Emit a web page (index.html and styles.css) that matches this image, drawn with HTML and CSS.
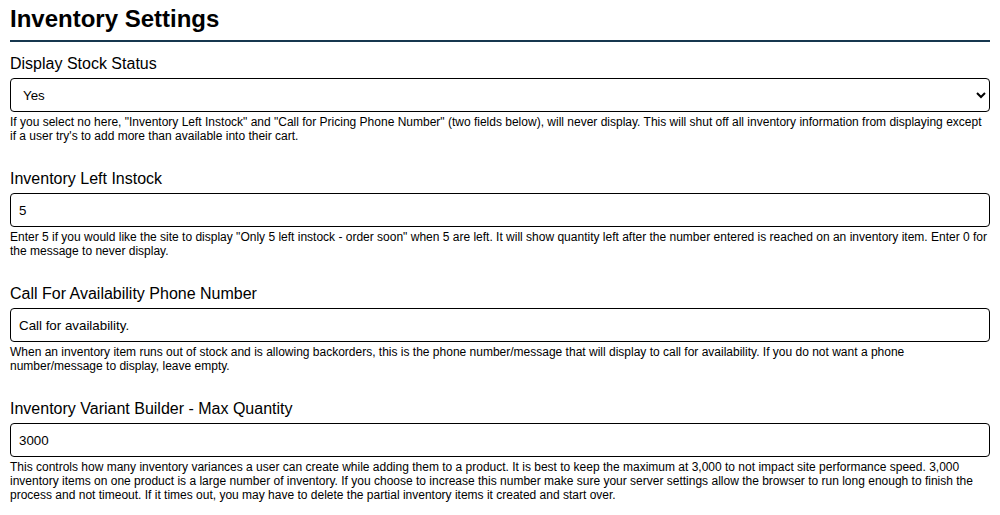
FILE: index.html
```html
<!DOCTYPE html>
<html lang="en">
<head>
    <meta charset="UTF-8">
    <meta name="viewport" content="width=device-width, initial-scale=1.0">
    <title>Inventory Settings</title>
    <link rel="stylesheet" href="styles.css">
</head>
<body>
    <div class="settings">
        <h1 class="settings-title">Inventory Settings</h1>

        <div class="field">
            <label class="field-label" for="stock-status">Display Stock Status</label>
            <select class="field-input" id="stock-status">
                <option>Yes</option>
                <option>No</option>
            </select>
            <div class="field-help">If you select no here, "Inventory Left Instock" and "Call for Pricing Phone Number" (two fields below), will never display. This will shut off all inventory information from displaying except if a user try's to add more than available into their cart.</div>
        </div>

        <div class="field">
            <label class="field-label" for="left-instock">Inventory Left Instock</label>
            <input class="field-input" type="text" id="left-instock" value="5">
            <div class="field-help">Enter 5 if you would like the site to display "Only 5 left instock - order soon" when 5 are left. It will show quantity left after the number entered is reached on an inventory item. Enter 0 for the message to never display.</div>
        </div>

        <div class="field">
            <label class="field-label" for="call-phone">Call For Availability Phone Number</label>
            <input class="field-input" type="text" id="call-phone" value="Call for availability.">
            <div class="field-help">When an inventory item runs out of stock and is allowing backorders, this is the phone number/message that will display to call for availability. If you do not want a phone number/message to display, leave empty.</div>
        </div>

        <div class="field">
            <label class="field-label" for="max-qty">Inventory Variant Builder - Max Quantity</label>
            <input class="field-input" type="text" id="max-qty" value="3000">
            <div class="field-help">This controls how many inventory variances a user can create while adding them to a product. It is best to keep the maximum at 3,000 to not impact site performance speed. 3,000 inventory items on one product is a large number of inventory. If you choose to increase this number make sure your server settings allow the browser to run long enough to finish the process and not timeout. If it times out, you may have to delete the partial inventory items it created and start over.</div>
        </div>
    </div>
</body>
</html>
```

FILE: styles.css
```css
body {
    margin: 0;
    font-family: "Liberation Sans", Arial, sans-serif;
    background-color: #fff;
    color: #000;
}

.settings {
    padding: 5px 10px 0 10px;
}

.settings-title {
    margin: 0 0 13px 0;
    font-size: 24px;
    line-height: 28px;
    font-weight: bold;
    padding-bottom: 7px;
    border-bottom: 2px solid #17374f;
}

.field {
    display: flex;
    flex-direction: column;
    margin-bottom: 27px;
}

.field-label {
    font-size: 16px;
    line-height: 18px;
    margin-bottom: 5px;
}

.field-input {
    box-sizing: border-box;
    width: 100%;
    height: 34px;
    padding: 0 8px;
    border: 1px solid #000;
    border-radius: 4px;
    background-color: #fff;
    color: #000;
    font-family: "Liberation Sans", Arial, sans-serif;
    font-size: 13.33px;
}

select.field-input {
    padding-left: 8px;
}

.field-input:focus {
    outline: none;
}

.field-help {
    margin-top: 3px;
    font-size: 12px;
    line-height: 14px;
}
```
